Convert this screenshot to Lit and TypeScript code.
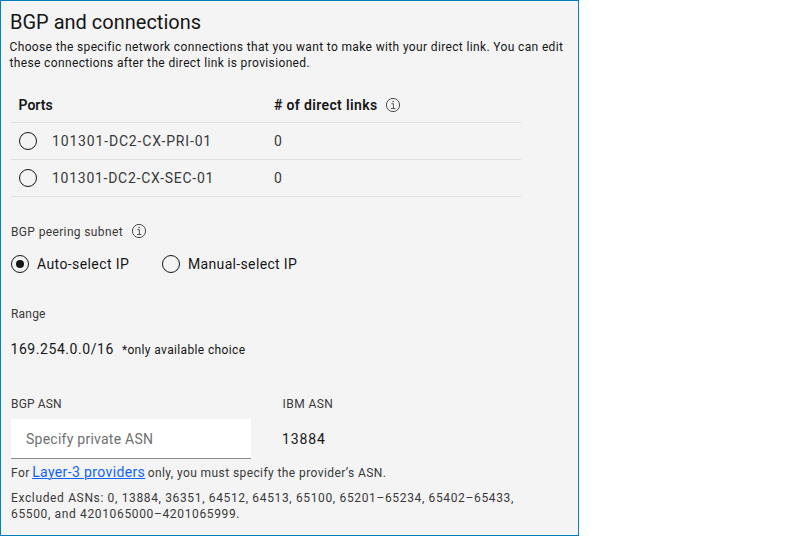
import { LitElement, html, css } from "lit";
import { customElement, property, state } from "lit/decorators.js";

@customElement("info-icon")
class InfoIcon extends LitElement {
  static styles = css`
    :host { display: block; width: 16px; height: 16px; color: #393939; }
    svg { display: block; }
  `;
  render() {
    return html`<svg width="16" height="16" viewBox="0 0 16 16">
      <circle cx="8" cy="8" r="6.6" fill="none" stroke="currentColor" stroke-width="0.9" />
      <path d="M6.3 6.7H8.4V11.4M6 11.5H10.4" fill="none" stroke="currentColor" stroke-width="0.85" />
      <circle cx="8.1" cy="4.6" r="0.75" fill="currentColor" />
    </svg>`;
  }
}

@customElement("radio-mark")
class RadioMark extends LitElement {
  @property({ type: Boolean }) checked = false;
  static styles = css`
    :host { display: block; width: 18px; height: 18px; flex: none; }
    .ring {
      box-sizing: border-box; width: 18px; height: 18px;
      border: 1px solid #161616; border-radius: 50%;
      display: grid; place-items: center;
    }
    .dot { width: 8px; height: 8px; border-radius: 50%; background: #161616; }
  `;
  render() {
    return html`<div class="ring">${this.checked ? html`<div class="dot"></div>` : null}</div>`;
  }
}

@customElement("app-root")
class AppRoot extends LitElement {
  @state() private port = "";
  @state() private mode = "auto";

  static styles = css`
    :host {
      display: block;
      font-family: Roboto, "Liberation Sans", sans-serif;
      font-size: 12px; line-height: 16px; letter-spacing: 0.36px;
      color: #161616;
    }
    .panel {
      box-sizing: border-box; width: 579px; height: 536px;
      border: 1px solid #0080bf; background: #f4f4f4;
      padding: 7px 0 0 10px; white-space: nowrap;
    }
    h1 {
      margin: 0 0 3px -1px; font-size: 20px; line-height: 28px;
      font-weight: 400; letter-spacing: 0;
    }
    .intro { margin: 0 0 17px -2px; padding-left: 0.5px; }
    .table { width: 510px; margin-bottom: 27px; font-size: 14px; line-height: 18px; }
    .row {
      display: grid; grid-template-columns: 263px 1fr; align-items: center;
      height: 36px; border-bottom: 1px solid #e0e0e0; color: #393939;
    }
    .head { height: 34px; font-weight: 600; color: #161616; }
    .head .port { letter-spacing: 0; padding-left: 7.5px; }
    .head .links { display: flex; gap: 7.5px; align-items: center; letter-spacing: 0.36px; }
    .port { display: flex; align-items: center; gap: 15px; padding-left: 8px; }
    .pri { letter-spacing: 0.83px; }
    .sec { letter-spacing: 0.73px; }
    .label { color: #393939; }
    .peering { display: flex; gap: 8.5px; margin-bottom: 15px; height: 16px; }
    .peering info-icon { margin-top: -1px; }
    .radios { display: flex; margin-bottom: 33px; font-size: 14px; line-height: 18px; }
    .choice { display: flex; gap: 8px; cursor: pointer; }
    .auto { width: 151px; letter-spacing: 0.4px; }
    .manual { letter-spacing: 0.34px; }
    .range { margin-bottom: 18px; letter-spacing: 0.2px; }
    .subnet { display: flex; align-items: baseline; gap: 8px; height: 18px; margin-bottom: 38px; }
    .value { font-size: 14px; line-height: 18px; letter-spacing: 0.56px; margin-left: -0.5px; }
    .asn { display: grid; grid-template-columns: 240px auto; column-gap: 31px; row-gap: 7px; }
    .bgp { letter-spacing: 0.15px; }
    .ibm { letter-spacing: 0.45px; padding-left: 0.5px; }
    input {
      box-sizing: border-box; width: 240px; height: 40px; margin: 0;
      padding: 1px 15px 0; border: 0; border-bottom: 1px solid #8d8d8d; border-radius: 0;
      outline: none; background: #fff; color: #161616;
      font: 14px/18px Roboto, "Liberation Sans", sans-serif; letter-spacing: 0.25px;
    }
    input::placeholder { color: #6f6f6f; opacity: 1; }
    .fixed { padding-top: 11px; font-size: 14px; line-height: 18px; letter-spacing: 0.88px; }
    .help {
      display: flex; align-items: baseline; gap: 2.5px; height: 18px; margin: 4px 0 9px;
      color: #393939; letter-spacing: 0.4px;
    }
    .help a {
      font-size: 14px; line-height: 18px; color: #0f62fe; text-decoration: underline;
      text-underline-offset: 1px; text-decoration-thickness: 1px; letter-spacing: 0.37px;
    }
    .help .rest { letter-spacing: 0.41px; }
    .excluded { color: #393939; letter-spacing: 0.645px; }
  `;

  private portRow(name: string, kind: string) {
    return html`<div class="row" @click=${() => (this.port = name)}>
      <div class="port ${kind}"><radio-mark ?checked=${this.port === name}></radio-mark>${name}</div>
      <div>0</div>
    </div>`;
  }

  render() {
    return html`<section class="panel">
      <h1>BGP and connections</h1>
      <div class="intro">
        Choose the specific network connections that you want to make with your direct link. You can edit<br />these
        connections after the direct link is provisioned.
      </div>
      <div class="table">
        <div class="row head">
          <div class="port">Ports</div>
          <div class="links"><span># of direct links</span><info-icon></info-icon></div>
        </div>
        ${this.portRow("101301-DC2-CX-PRI-01", "pri")} ${this.portRow("101301-DC2-CX-SEC-01", "sec")}
      </div>
      <div class="peering label"><span>BGP peering subnet</span><info-icon></info-icon></div>
      <div class="radios">
        <div class="choice auto" @click=${() => (this.mode = "auto")}>
          <radio-mark ?checked=${this.mode === "auto"}></radio-mark><span>Auto-select IP</span>
        </div>
        <div class="choice manual" @click=${() => (this.mode = "manual")}>
          <radio-mark ?checked=${this.mode === "manual"}></radio-mark><span>Manual-select IP</span>
        </div>
      </div>
      <div class="range label">Range</div>
      <div class="subnet"><span class="value">169.254.0.0/16</span><span>*only available choice</span></div>
      <div class="asn">
        <div class="label bgp">BGP ASN</div>
        <div class="label ibm">IBM ASN</div>
        <input placeholder="Specify private ASN" />
        <div class="fixed">13884</div>
      </div>
      <div class="help">
        <span>For</span><a>Layer-3 providers</a><span class="rest">only, you must specify the provider’s ASN.</span>
      </div>
      <div class="excluded">
        Excluded ASNs: 0, 13884, 36351, 64512, 64513, 65100, 65201–65234, 65402–65433,<br />65500, and
        4201065000–4201065999.
      </div>
    </section>`;
  }
}
